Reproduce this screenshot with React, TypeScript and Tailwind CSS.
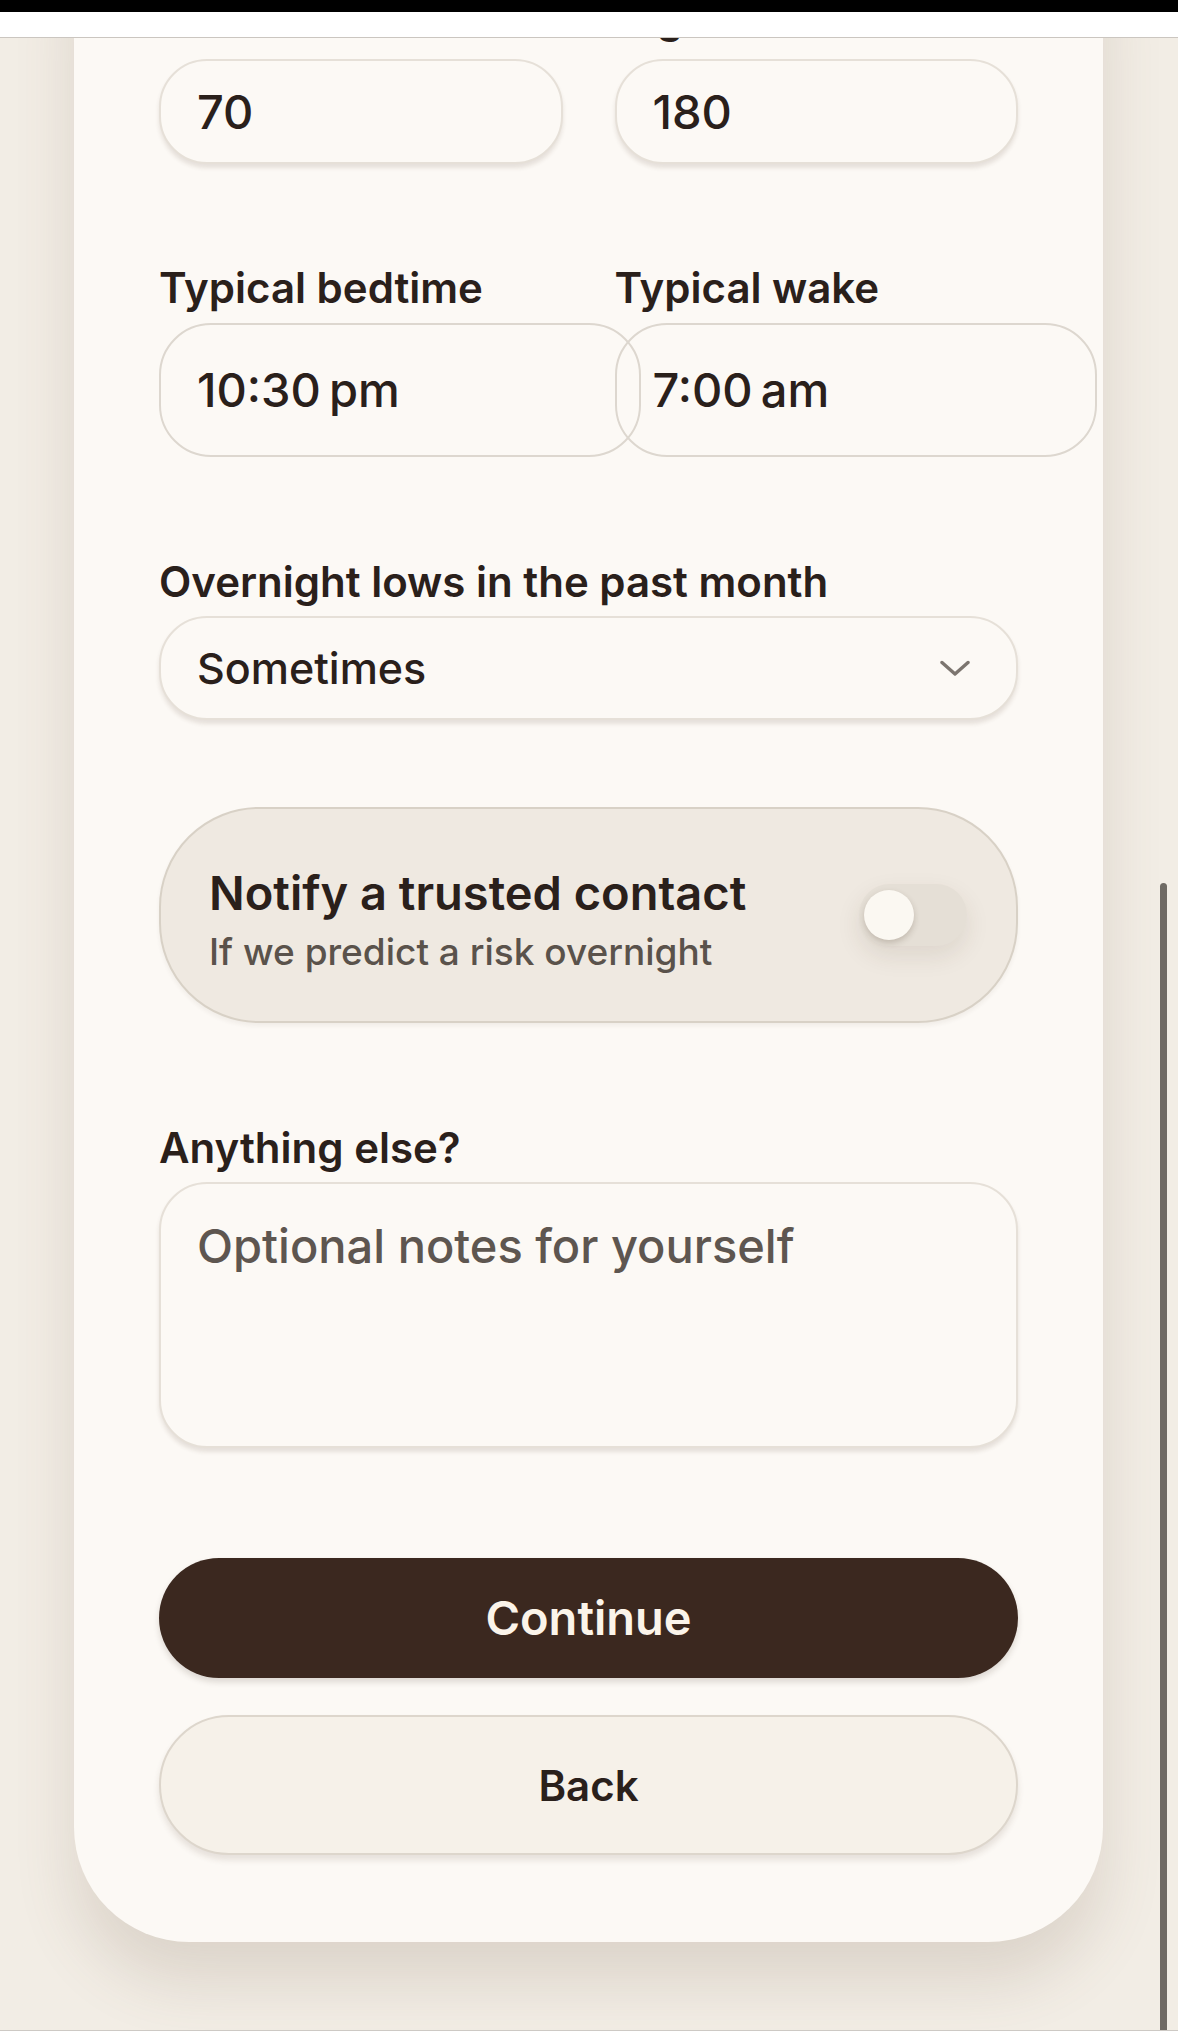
import { ReactNode } from "react";

// label above a field
const Label = ({ children, className = "" }: { children: ReactNode; className?: string }) => (
  <p className={`text-[42px] leading-[50px] font-semibold text-[#2a201b] ${className}`}>{children}</p>
);

const fieldBox =
  "w-full rounded-[48px] border-2 border-[#e6e0d8] bg-[#fcf9f5] text-[#2a201b] font-medium outline-none shadow-[0_4px_4px_rgba(70,50,30,0.12)]";

const App = () => {
  return (
    <div className="flex h-[2040px] w-full flex-col overflow-hidden bg-white font-['Inter',sans-serif]">
      {/* browser chrome */}
      <div className="h-[12px] shrink-0 bg-black" />
      <div className="h-[26px] shrink-0 border-b border-[#cbc6c0] bg-white" />

      {/* scrolled page */}
      <div className="relative h-[1993px] shrink-0 overflow-hidden border-b border-[#cdc9c4] bg-[#f2ede5]">
        <div className="ml-[74px] -mt-[165px] w-[1029px] rounded-[115px] bg-[#fcf9f5] px-[85px] pt-[120px] pb-[87px] shadow-[0_40px_60px_rgba(110,90,70,0.16)]">
          {/* range */}
          <div className="grid grid-cols-2 gap-x-[52px]">
            <Label className="mb-[16px]">Low</Label>
            <Label className="mb-[16px]">High</Label>
            <input readOnly defaultValue="70" className={`${fieldBox} h-[105px] px-[36px] text-[47px]`} />
            <input readOnly defaultValue="180" className={`${fieldBox} h-[105px] px-[36px] text-[47px]`} />
          </div>

          {/* sleep times */}
          <div className="mt-[99px] grid grid-cols-2 gap-x-[52px]">
            <Label className="mb-[10px]">Typical bedtime</Label>
            <Label className="mb-[10px]">Typical wake</Label>
            <div className="flex h-[134px] w-[482px] items-center rounded-[52px] border-2 border-[#ddd7cf] px-[36px] text-[47px] font-medium text-[#2a201b]">
              10:30{"\u202F"}pm
            </div>
            <div className="flex h-[134px] w-[482px] items-center rounded-[52px] border-2 border-[#ddd7cf] px-[36px] text-[47px] font-medium text-[#2a201b]">
              7:00{"\u202F"}am
            </div>
          </div>

          {/* overnight lows */}
          <div className="mt-[100px]">
            <Label className="mb-[9px]">Overnight lows in the past month</Label>
            <div className={`${fieldBox} flex h-[104px] items-center justify-between pl-[36px] pr-[46px] text-[43px]`}>
              <span>Sometimes</span>
              <svg width="30" height="17" viewBox="0 0 30 17" fill="none">
                <path d="M2 2.5 L15 14 L28 2.5" stroke="#7c756f" strokeWidth="3.4" strokeLinecap="round" strokeLinejoin="round" />
              </svg>
            </div>
          </div>

          {/* trusted contact toggle */}
          <div className="mt-[87px] flex h-[216px] items-center justify-between rounded-[100px] border-2 border-[#d8d1c6] bg-[#efe9e1] pl-[48px] pr-[49px] shadow-[0_3px_4px_rgba(70,50,30,0.06)]">
            <div className="pt-[10px]">
              <p className="text-[47px] leading-[54px] font-semibold text-[#2a201b]">Notify a trusted contact</p>
              <p className="mt-[10px] text-[37px] leading-[44px] font-medium text-[#5a524b]">If we predict a risk overnight</p>
            </div>
            <div className="flex h-[62px] w-[108px] items-center rounded-full bg-[#e5dfd6] px-[5px] shadow-[0_10px_24px_rgba(70,50,30,0.10)]">
              <div className="h-[50px] w-[50px] rounded-full bg-[#fbf8f2] shadow-[0_3px_6px_rgba(70,50,30,0.22)]" />
            </div>
          </div>

          {/* notes */}
          <div className="mt-[100px]">
            <Label className="mb-[9px]">Anything else?</Label>
            <textarea
              placeholder="Optional notes for yourself"
              className={`${fieldBox} block h-[266px] resize-none px-[36px] pt-[27px] text-[47px] leading-[1.5] placeholder:text-[#5e5650]`}
            />
          </div>

          {/* actions */}
          <button className="mt-[110px] flex h-[120px] w-full items-center justify-center rounded-full bg-[#3b281f] text-[47px] font-semibold text-[#fbf4ea] shadow-[0_4px_6px_rgba(40,25,15,0.15)]">
            Continue
          </button>
          <button className="mt-[37px] flex h-[140px] w-full items-center justify-center rounded-[70px] border-2 border-[#ddd6cc] bg-[#f6f1e9] text-[42px] font-semibold text-[#2a201b] shadow-[0_5px_6px_rgba(70,50,30,0.12)]">
            Back
          </button>
        </div>

        {/* scrollbar */}
        <div className="absolute top-[845px] bottom-0 left-[1160px] w-[7px] rounded-t-full bg-[#6f6a64]" />
      </div>
    </div>
  );
};

export default App;
